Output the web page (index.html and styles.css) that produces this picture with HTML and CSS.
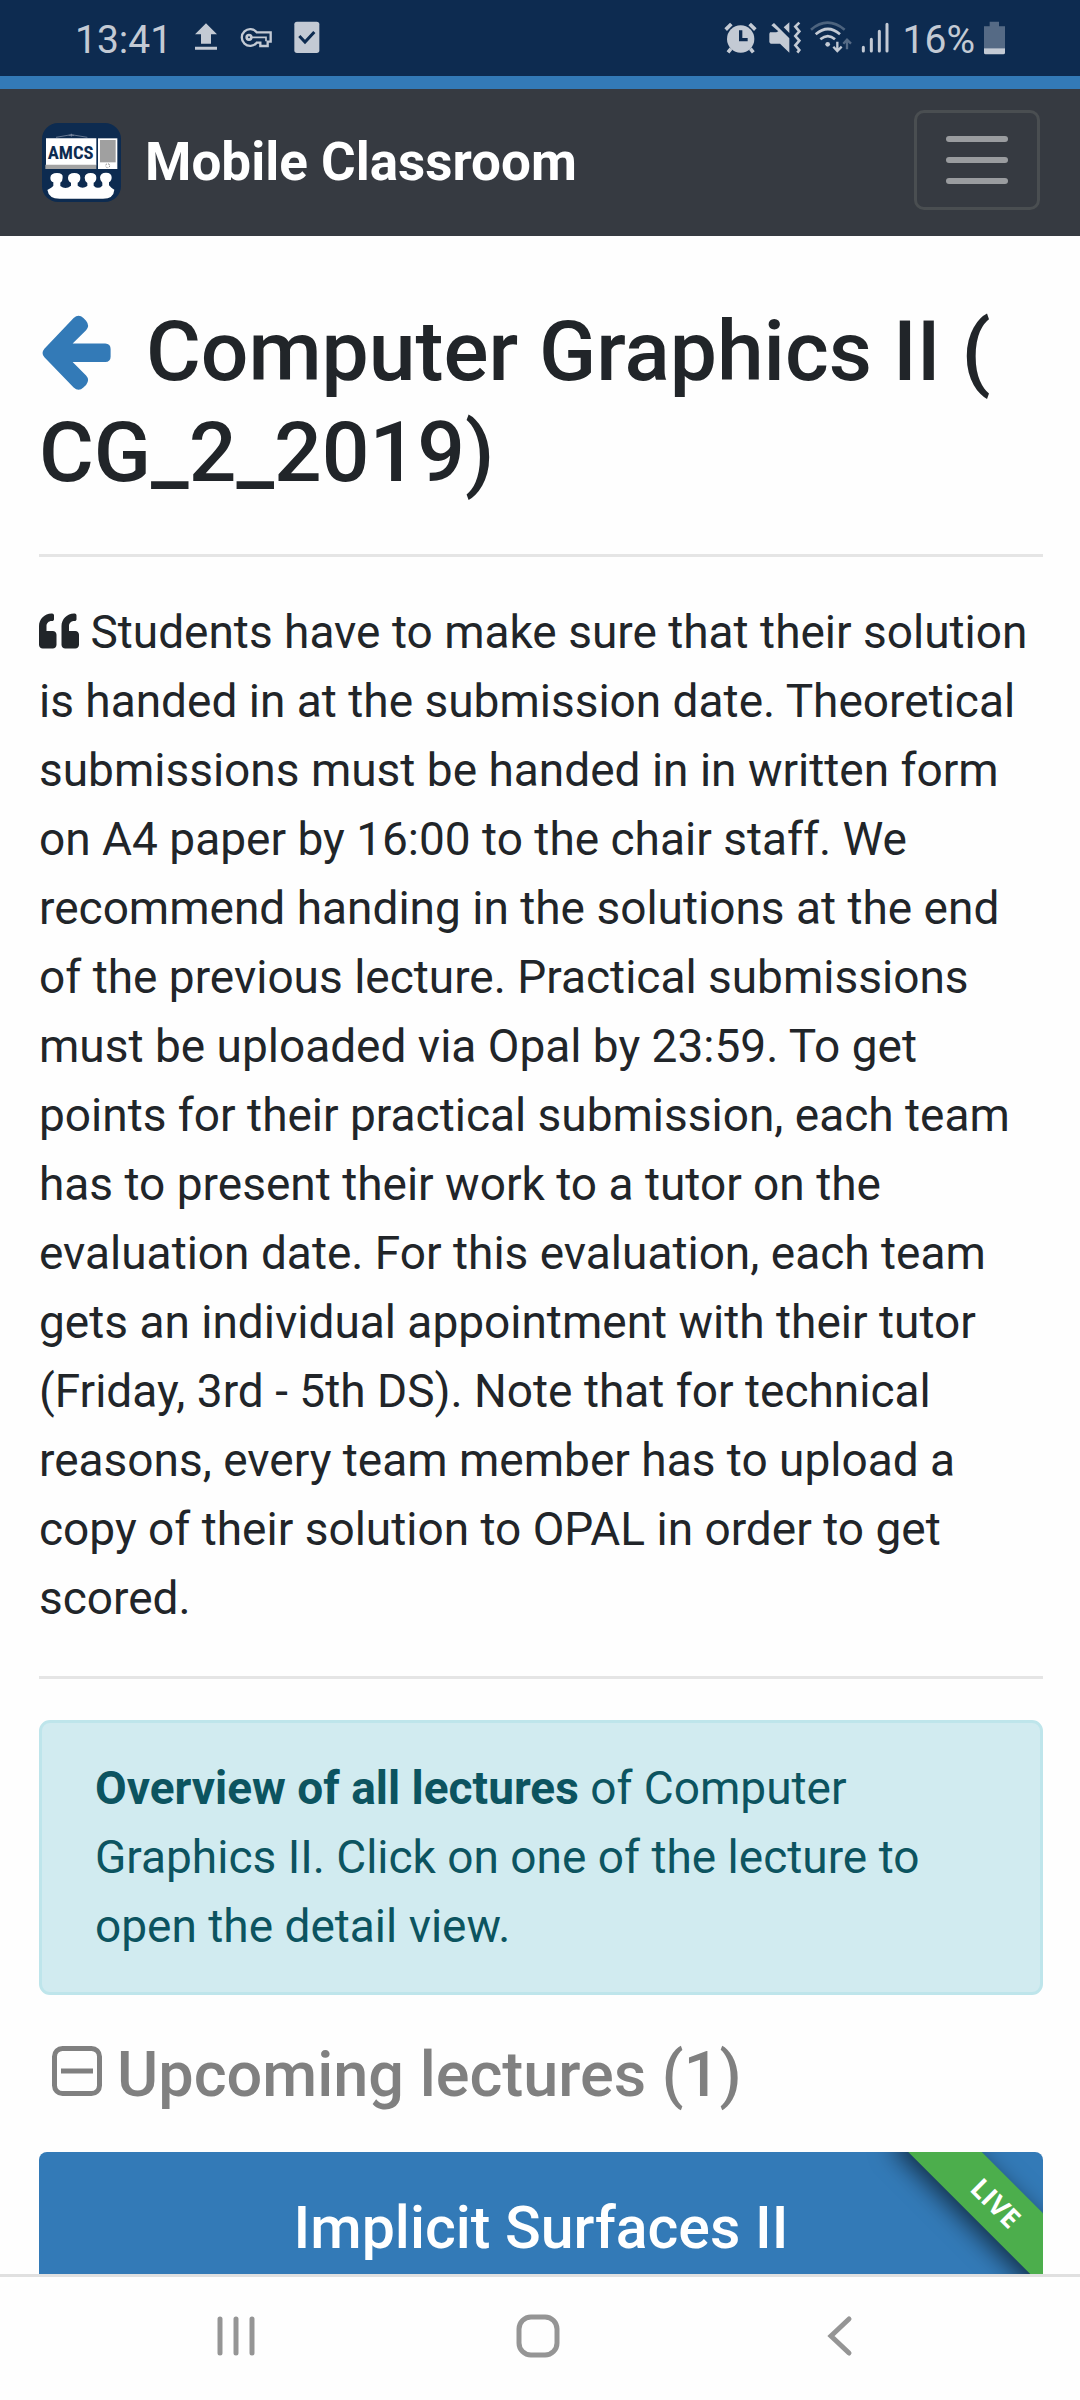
FILE: index.html
```html
<!DOCTYPE html>
<html lang="en">
<head>
  <meta charset="utf-8">
  <meta name="viewport" content="width=device-width, initial-scale=1">
  <title>Mobile Classroom</title>
  <link rel="stylesheet" href="styles.css">
</head>
<body>
  <div class="app">
    <div class="status">
      <div class="status-left">
        <span class="status-text">13:41</span>
        <svg width="24" height="34" viewBox="588 65 72 102" fill="currentColor"><path d="M624 72l33 33h-18v28h-30v-28h-18zM591 142h66v9h-66z"/></svg>
        <svg width="32" height="34" viewBox="726 65 96 102" fill="none" stroke="currentColor" stroke-width="7"><path d="M776 99a25 25 0 1 0 0 31h11v10h22v-13h9v-28z"/><circle cx="753" cy="114" r="7" stroke-width="8"/><path d="M757 114h47v12" stroke-width="5"/></svg>
        <svg width="26" height="34" viewBox="886 65 78 102"><rect x="887" y="67" width="75" height="94" rx="8" fill="currentColor"/><path d="M902 110l17 18 28-30" fill="none" stroke="#0d2b50" stroke-width="9"/></svg>
      </div>
      <div class="status-right">
        <svg class="alarm" width="33" height="34" viewBox="67 65 99 102"><circle cx="117" cy="119" r="41" fill="currentColor"/><path d="M72 91l17-17M161 91l-17-17M88 148l-9 11M146 148l9 11" stroke="currentColor" stroke-width="11"/><path d="M117 93v28h21" fill="none" stroke="#0d2b50" stroke-width="10"/></svg>
        <svg width="32" height="34" viewBox="203 65 96 102" fill="currentColor"><path d="M206 99h19l6-3-21-18 8-7 46 46v43l-28-27h-28l-4-4v-26zM264 69v32l-17-17z"/><path d="M294 70l-12 12 12 14-12 14 12 14-12 14 12 14-6 8" fill="none" stroke="currentColor" stroke-width="8"/></svg>
        <svg width="42" height="34" viewBox="335 65 126 102" fill="none" stroke="currentColor" stroke-width="8"><path d="M338 91q49-42 101 0" opacity=".35"/><path d="M352 105q37-32 73 0M366 120q23-19 44 0"/><circle cx="388" cy="135" r="7" fill="currentColor" stroke="none"/><path d="M417 127v27m-12-12l12 13 13-13" stroke-width="7"/><path d="M446 150v-27m-11 10l11-12 12 12" stroke-width="7" opacity=".4"/></svg>
        <svg width="28" height="34" viewBox="484 65 84 102" stroke="currentColor" stroke-width="9" stroke-linecap="round"><path d="M491 144v11M515 120v35M539 96v59M562 75v80"/></svg>
        <span class="status-text status-percent">16%</span>
        <svg width="21" height="34" viewBox="852 62 63 102" fill="currentColor"><path d="M869 64h28v14h18v66h-63V78h17z" opacity=".4"/><path d="M852 144h63v13q0 5-5 5h-53q-5 0-5-5z"/></svg>
      </div>
    </div>

    <header class="navbar">
      <a class="brand" href="#">
        <svg class="logo" viewBox="36 39 237 237">
          <rect x="36" y="39" width="237" height="237" rx="48" fill="#0d2b50"/>
          <path d="M78 82l46-8 48 8M116 76h16M124 71v9" fill="none" stroke="#8f9bb0" stroke-width="2"/>
          <path d="M48 85h151v81H48z" fill="#fff"/>
          <path d="M46 164h153v13H46z" fill="#a3a3a3"/>
          <path d="M204 85h58v92h-58z" fill="#fff"/>
          <path d="M210 90h47v67h-47z" fill="#a0a0a0"/>
          <circle cx="233" cy="167" r="6" fill="none" stroke="#555" stroke-width="2" stroke-dasharray="5 4"/>
          <text class="logo-text" x="122" y="147" text-anchor="middle">AMCS</text>
          <path d="M52 240q14-8 18-13v-10q-9-3-9-14 1-14 20-14t17 14q0 11-7 15v10q16 12 32-1v-9q-9-4-9-15 1-14 19-14t18 14q0 11-8 15v9q14 12 29 1v-9q-8-5-8-16 1-14 18-14t17 14q0 11-8 15v9q13 13 26 0v-9q-7-5-7-16 1-14 18-14t17 14q0 11-8 15v9q6 8 16 13-2 27-34 27H89q-33 0-37-27z" fill="#fff"/>
        </svg>
        <span>Mobile Classroom</span>
      </a>
      <button class="toggler" type="button" aria-label="Toggle navigation">
        <span class="bar"></span><span class="bar"></span><span class="bar"></span>
      </button>
    </header>

    <main class="content">
      <h1 class="title"><a class="back" href="#" aria-label="Back"><svg class="back-icon" viewBox="113 100 224 241"><path fill="currentColor" d="M128 206L215 115Q230 102 244 115L252 123Q264 138 252 151L212 191H309Q325 192 325 207V230Q325 245 309 246H212L252 286Q264 299 252 314L244 322Q230 335 215 322L128 232Q117 219 128 206z"/></svg></a> Computer Graphics II ( CG_2_2019)</h1>
      <hr class="rule">
      <p class="description"><svg class="quote" viewBox="0 0 512 512"><path fill="currentColor" d="M464 256h-80v-64c0-35.300 28.700-64 64-64h8c13.300 0 24-10.700 24-24V56c0-13.300-10.700-24-24-24h-8c-88.400 0-160 71.600-160 160v240c0 26.500 21.500 48 48 48h128c26.500 0 48-21.500 48-48V304c0-26.500-21.500-48-48-48zm-288 0H96v-64c0-35.300 28.700-64 64-64h8c13.300 0 24-10.700 24-24V56c0-13.300-10.700-24-24-24h-8C71.600 32 0 103.600 0 192v240c0 26.500 21.500 48 48 48h128c26.500 0 48-21.500 48-48V304c0-26.500-21.500-48-48-48z"/></svg> Students have to make sure that their solution is handed in at the submission date. Theoretical submissions must be handed in in written form on A4 paper by 16:00 to the chair staff. We recommend handing in the solutions at the end of the previous lecture. Practical submissions must be uploaded via Opal by 23:59. To get points for their practical submission, each team has to present their work to a tutor on the evaluation date. For this evaluation, each team gets an individual appointment with their tutor (Friday, 3rd - 5th DS). Note that for technical reasons, every team member has to upload a copy of their solution to OPAL in order to get scored.</p>
      <hr class="rule rule-after-text">
      <div class="alert"><strong>Overview of all lectures</strong> of Computer Graphics II. Click on one of the lecture to open the detail view.</div>
      <h2 class="section">
        <button class="section-toggle" type="button" aria-expanded="true">
          <svg width="50" height="50" viewBox="0 0 50 50" fill="none" stroke="currentColor"><rect x="2.500" y="2.500" width="45" height="45" rx="8" stroke-width="5"/><path d="M9 25h32" stroke-width="5"/></svg>
          <span>Upcoming lectures (1)</span>
        </button>
      </h2>
      <a class="card" href="#">
        <h3 class="card-title">Implicit Surfaces II</h3>
        <span class="ribbon">LIVE</span>
      </a>
    </main>

    <nav class="system-nav" aria-label="System">
      <button type="button" aria-label="Recent apps"><svg width="40" height="42" viewBox="0 0 40 42" stroke="currentColor" stroke-width="5" stroke-linecap="round"><path d="M4 4v34M20 4v34M36 4v34"/></svg></button>
      <button type="button" aria-label="Home"><svg width="44" height="44" viewBox="0 0 44 44" fill="none" stroke="currentColor" stroke-width="5"><rect x="3" y="3" width="38" height="38" rx="12"/></svg></button>
      <button type="button" aria-label="Back"><svg width="26" height="42" viewBox="0 0 26 42" fill="none" stroke="currentColor" stroke-width="5" stroke-linecap="round"><path d="M22 4L4 21l18 17"/></svg></button>
    </nav>
  </div>
</body>
</html>
```
FILE: styles.css
```css
* {
  box-sizing: border-box;
}

body {
  margin: 0;
  background: #fefefe;
  color: #212529;
  font-family: Roboto, "Liberation Sans", sans-serif;
  font-size: 46px;
  line-height: 69px;
}

svg {
  flex: none;
}

button {
  padding: 0;
  border: 0;
  background: none;
  color: inherit;
  font: inherit;
}

a {
  color: inherit;
  text-decoration: none;
}

.app {
  display: flex;
  flex-direction: column;
  height: 100vh;
}

/* Phone status bar */
.status {
  display: flex;
  flex: none;
  justify-content: space-between;
  align-items: center;
  height: 76px;
  padding: 0 75px;
  background: #0d2b50;
  color: #c3cad4;
}

.status-left,
.status-right {
  display: flex;
  align-items: center;
}

.status-left {
  gap: 22px;
}

.status-right {
  gap: 9px;
}

.status-text {
  padding-top: 4px;
  font-size: 39px;
  line-height: 48px;
}

.status-percent {
  margin-left: 5px;
}

.alarm {
  margin-right: 3px;
}

/* Site header */
.navbar {
  display: flex;
  flex: none;
  justify-content: space-between;
  align-items: center;
  padding: 21px 40px 26px 42px;
  border-top: 13px solid #337ab7;
  background: #363a41;
}

.brand {
  display: flex;
  align-items: center;
  gap: 24px;
  padding-top: 4px;
  color: #fff;
  font-size: 53px;
  font-weight: 700;
}

.logo {
  width: 79px;
  height: 79px;
}

.logo-text {
  fill: #0d2b50;
  font: 700 56px "Liberation Sans Narrow", "Roboto Condensed", Roboto, sans-serif;
}

.toggler {
  display: flex;
  flex-direction: column;
  justify-content: center;
  align-items: center;
  gap: 15px;
  width: 126px;
  height: 100px;
  border: 3px solid #4a4e51;
  border-radius: 10px;
}

.bar {
  width: 62px;
  height: 6px;
  border-radius: 3px;
  background: #9a9c9f;
}

/* Page content */
.content {
  flex: 1;
  min-height: 0;
  padding: 65px 37px 0 39px;
  overflow-y: auto;
  scrollbar-width: none;
}

.title {
  margin: 0;
  font-size: 84px;
  font-weight: 500;
  line-height: 101px;
}

.back {
  margin-right: 10px;
  color: #337ab7;
}

.back-icon {
  width: 76px;
  height: 81px;
  vertical-align: -14px;
}

.rule {
  height: 3px;
  margin: 51px 0 41px;
  border: 0;
  background: #e5e5e5;
}

.rule-after-text {
  margin-top: 43px;
}

.description {
  margin: 0;
}

.quote {
  width: 40px;
  height: 40px;
  vertical-align: -3px;
}

.alert {
  padding: 31px 53px;
  border: 3px solid #bee5eb;
  border-radius: 11px;
  background: #d1ebf0;
  color: #0c5460;
}

.section {
  margin: 42px 0 39px;
  color: #808080;
  font-size: 63px;
  font-weight: 500;
  line-height: 76px;
}

.section-toggle {
  display: flex;
  align-items: baseline;
  gap: 15px;
  padding-left: 13px;
}

.card {
  display: block;
  position: relative;
  padding: 40px;
  overflow: hidden;
  border-radius: 8px;
  background: #337ab7;
  color: #fff;
  text-align: center;
}

.card-title {
  margin: 0;
  font-size: 59px;
  font-weight: 500;
  line-height: 71px;
}

.ribbon {
  position: absolute;
  top: 25px;
  right: -68px;
  width: 230px;
  background: #4cae4c;
  box-shadow: 0 8px 24px rgba(0, 0, 0, 0.6);
  font-family: "Open Sans", sans-serif;
  font-size: 27px;
  font-weight: 700;
  line-height: 52px;
  transform: rotate(45deg);
}

/* Phone navigation buttons */
.system-nav {
  display: flex;
  flex: none;
  height: 126px;
  padding: 0 89px 5px 85px;
  border-top: 3px solid #e0e0e0;
  background: #fefefe;
  color: #959595;
}

.system-nav button {
  display: flex;
  flex: 1;
  justify-content: center;
  align-items: center;
}
```
